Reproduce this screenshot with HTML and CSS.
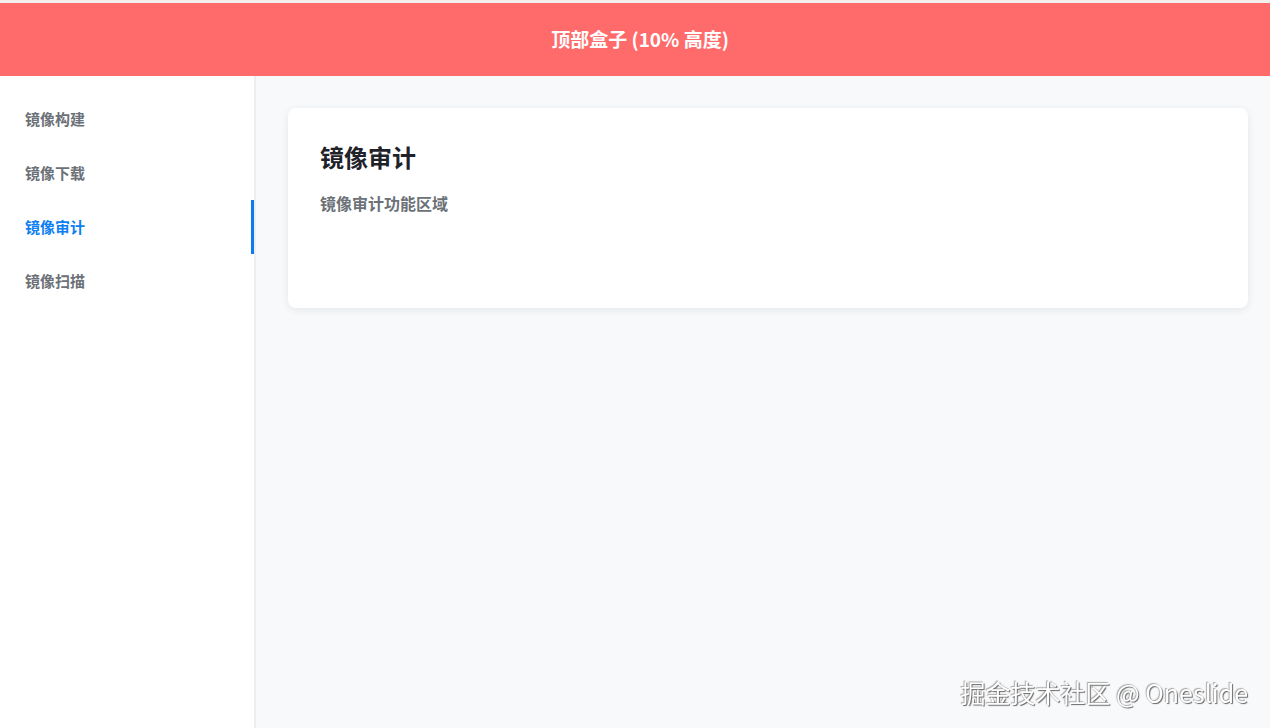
FILE: index.html
```html
<!DOCTYPE html>
<html lang="zh-CN">
<head>
	<meta charset="UTF-8">
	<title>镜像审计</title>
	<link rel="stylesheet" href="styles.css">
</head>
<body>
	<div class="top-line"></div>
	<div id="header">顶部盒子 (10% 高度)</div>
	<div id="main">
		<ul class="side-nav">
			<li>镜像构建</li>
			<li>镜像下载</li>
			<li class="active">镜像审计</li>
			<li>镜像扫描</li>
		</ul>
		<div class="content">
			<div class="card">
				<h2 class="card-title">镜像审计</h2>
				<p class="card-desc">镜像审计功能区域</p>
			</div>
		</div>
	</div>
	<div class="watermark">掘金技术社区 @ Oneslide</div>
</body>
</html>
```

FILE: styles.css
```css
/* Reset */
body,h1,h2,h3,p,div,ul,li{ margin:0; padding:0; border:0;}
ul{ list-style:none;}
html,body{ height:100%; overflow:hidden;}
body{ font-family:"Noto Sans CJK SC","Noto Sans",sans-serif; background:#f8f9fb;}

.top-line{
	height: 3px;
	background-color: #f3f0ec;
}
/* 顶部盒子 */
#header{
	height: 10vh;
	line-height: 10vh;
	padding-left: 10px;
	background-color: #ff6b6b;
	color: #fff;
	font-size: 19px;
	font-weight: bold;
	text-align: center;
}
#main{
	display: flex;
	height: calc(90vh - 3px);
}
/* 侧边栏 */
.side-nav{
	width: 254px;
	flex-shrink: 0;
	padding-top: 16px;
	background-color: #fff;
	border-right: 2px solid #eceef1;
}
.side-nav li{
	height: 54px;
	line-height: 54px;
	padding-left: 25px;
	font-size: 15px;
	font-weight: bold;
	color: #6c7178;
	border-right: 3px solid transparent;
}
.side-nav li.active{
	color: #0d7ff2;
	border-right-color: #0a7cf0;
}
/* 内容区 */
.content{
	flex: 1;
	padding: 32px;
}
.card{
	width: 960px;
	height: 200px;
	box-sizing: border-box;
	padding: 31px 32px 32px;
	background-color: #fff;
	border-radius: 8px;
	box-shadow: 0 2px 8px rgba(0,0,0,0.08);
}
.card-title{
	font-size: 24px;
	line-height: 36px;
	font-weight: bold;
	color: #1f2329;
	margin-bottom: 16px;
}
.card-desc{
	font-size: 16px;
	line-height: 24px;
	font-weight: bold;
	color: #6c7178;
}
/* 水印 */
.watermark{
	position: fixed;
	right: 22px;
	bottom: 18px;
	font-size: 25px;
	color: #fff;
	text-shadow: 1px 1px 1px #666, -1px -1px 1px #aaa;
}
```
